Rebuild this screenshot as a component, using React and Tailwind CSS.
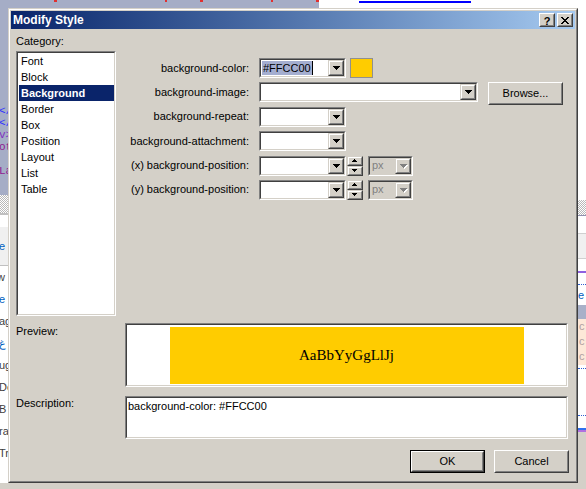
import React from "react";

const Tri = ({ dir = "down", disabled = false, size = "lg" }) => {
  const big = size === "lg";
  const d = big
    ? "M0 0h7v1H0zM1 1h5v1H1zM2 2h3v1H2zM3 3h1v1H3z"
    : "M0 0h5v1H0zM1 1h3v1H1zM2 2h1v1H2z";
  const w = big ? 8 : 6;
  const h = big ? 5 : 4;
  const t = dir === "up" ? `scale(1,-1) translate(0,${big ? -4 : -3})` : undefined;
  return (
    <svg width={w} height={h} viewBox={`0 0 ${w} ${h}`} shapeRendering="crispEdges">
      {disabled && (
        <g transform="translate(1,1)">
          <path d={d} fill="#ffffff" transform={t} />
        </g>
      )}
      <path d={d} fill={disabled ? "#808080" : "#000000"} transform={t} />
    </svg>
  );
};

const DropBtn = ({ disabled }) => (
  <div className="w-[16px] h-full shrink-0 bg-[#d4d0c8] border border-t-[#d4d0c8] border-l-[#d4d0c8] border-r-[#404040] border-b-[#404040]">
    <div className="w-full h-full border border-t-white border-l-white border-r-[#808080] border-b-[#808080] flex items-center justify-center pl-[1px] pt-[1px]">
      <Tri disabled={disabled} />
    </div>
  </div>
);

const SpinBtn = ({ dir }) => (
  <div className="w-full h-[10px] bg-[#d4d0c8] border border-t-[#d4d0c8] border-l-[#d4d0c8] border-r-[#404040] border-b-[#404040]">
    <div className="w-full h-full border border-t-white border-l-white border-r-[#808080] border-b-[#808080] flex items-center justify-center">
      <Tri dir={dir} size="sm" />
    </div>
  </div>
);

const Sunken = ({ className = "", inner = "", children }) => (
  <div className={`border border-t-[#808080] border-l-[#808080] border-r-white border-b-white ${className}`}>
    <div className={`w-full h-full border border-t-[#404040] border-l-[#404040] border-r-[#d4d0c8] border-b-[#d4d0c8] ${inner}`}>
      {children}
    </div>
  </div>
);

const Combo = ({ w, disabled = false, children }) => (
  <Sunken className={`h-[20px] shrink-0 ${w}`} inner={`flex ${disabled ? "bg-[#d4d0c8]" : "bg-white"}`}>
    <div className="flex-1 min-w-0 flex items-center pl-[1px] overflow-hidden">{children}</div>
    <DropBtn disabled={disabled} />
  </Sunken>
);

const PushBtn = ({ w, h, isDefault = false, children }) => {
  const body = (
    <div className="w-full h-full bg-[#d4d0c8] border border-t-white border-l-white border-r-[#404040] border-b-[#404040]">
      <div className="w-full h-full border border-t-[#d4d0c8] border-l-[#d4d0c8] border-r-[#808080] border-b-[#808080] flex items-center justify-center">
        {children}
      </div>
    </div>
  );
  return isDefault ? (
    <div className={`border border-black ${w} ${h}`}>{body}</div>
  ) : (
    <div className={`${w} ${h}`}>{body}</div>
  );
};

const Spinner = () => (
  <div className="ml-[1px] w-[16px] h-[20px] flex flex-col shrink-0">
    <SpinBtn dir="up" />
    <SpinBtn dir="down" />
  </div>
);

const Row = ({ label, children }) => (
  <div className="flex items-start h-[20px]">
    <div className="w-[124px] h-[20px] flex items-center justify-end whitespace-nowrap">{label}</div>
    <div className="ml-[10px] flex items-start">{children}</div>
  </div>
);

const categories = ["Font", "Block", "Background", "Border", "Box", "Position", "Layout", "List", "Table"];

const Checker = ({ h }) => (
  <div
    className={`${h} w-full bg-[repeating-conic-gradient(#b8b8b8_0_25%,#ffffff_0_50%)] bg-[length:2px_2px]`}
  />
);

export default function App() {
  return (
    <div className="relative w-[586px] h-[489px] overflow-hidden bg-white font-['Liberation_Sans',Arial,sans-serif] text-[11px] leading-[13px] text-black">
      {/* background editor */}
      <div className="flex flex-col w-full h-full">
        <div className="h-[8px] flex shrink-0">
          <div className="w-[319px] h-full bg-[#a5adc6] relative overflow-hidden">
            <div className="flex items-start h-full">
              <div className="ml-[54px] mt-[0px] w-[3px] h-[2px] bg-[#e03030]" />
              <div className="ml-[108px] w-[2px] h-[2px] bg-[#e03030]" />
              <div className="ml-[33px] w-[3px] h-[2px] bg-[#e03030]" />
              <div className="ml-[68px] w-[2px] h-[2px] bg-[#e03030]" />
              <div className="ml-[43px] w-[3px] h-[2px] bg-[#e03030]" />
            </div>
          </div>
          <div className="flex-1 h-full bg-white">
            <div className="ml-[40px] mt-[1px] w-[112px] h-[2px] bg-[#0000ff]" />
          </div>
        </div>
        <div className="flex-1 flex">
          <div className="w-[8px] h-full flex flex-col overflow-hidden font-['Liberation_Mono',monospace] text-[11px] leading-[11px]">
            <div className="h-[187px] bg-[#a5adc6] flex flex-col pt-[98px] gap-[1px]">
              <div className="whitespace-nowrap -ml-[1px] text-[#3030ff]">&lt;/</div>
              <div className="whitespace-nowrap -ml-[1px] text-[#3030ff]">&lt;/</div>
              <div className="whitespace-nowrap -ml-[1px] text-[#8030c0]">v&gt;</div>
              <div className="whitespace-nowrap -ml-[1px] text-[#902090]">ot</div>
              <div className="whitespace-nowrap -ml-[1px] mt-[12px] text-[#902090]">La</div>
            </div>
            <Checker h="h-[18px]" />
            <div className="flex-1 bg-white flex flex-col font-['Liberation_Sans',sans-serif] text-[11px] leading-[22px]">
              <div className="h-[2px] bg-[#c0c0c0]" />
              <div className="h-[12px]" />
              <div className="h-[38px] bg-[#f0f0f0] flex items-center text-[#0060c0] -ml-[1px]">e</div>
              <div className="h-[1px] bg-[#c0c0c0]" />
              <div className="whitespace-nowrap -ml-[3px] text-[#404040]">w</div>
              <div className="whitespace-nowrap -ml-[1px] text-[#0060c0]">e</div>
              <div className="whitespace-nowrap -ml-[1px] text-[#404040]">ag</div>
              <div className="whitespace-nowrap -ml-[1px] text-[#0060c0] underline">غ</div>
              <div className="whitespace-nowrap -ml-[1px] text-[#404040]">ug</div>
              <div className="whitespace-nowrap -ml-[1px] text-[#404040]">Do</div>
              <div className="whitespace-nowrap -ml-[1px] text-[#404040]">B</div>
              <div className="whitespace-nowrap -ml-[1px] text-[#404040]">ra</div>
              <div className="whitespace-nowrap -ml-[1px] text-[#404040]">Tr</div>
            </div>
          </div>
          <div className="flex-1 h-full bg-[#d4d0c8]" />
          <div className="w-[8px] h-full flex flex-col overflow-hidden text-[11px] leading-[13px]">
            <div className="h-[192px] bg-white shrink-0" />
            <Checker h="h-[15px]" />
            <div className="h-[1px] bg-[#9090b0]" />
            <div className="h-[17px] bg-white" />
            <div className="h-[26px] bg-[#f0f0f0] border-t border-b border-[#d0d0d0]" />
            <div className="h-[12px] bg-white" />
            <div className="h-[2px] bg-[#9060e0]" />
            <div className="h-[12px] bg-white border-b border-dotted border-[#3060d0]" />
            <div className="h-[20px] bg-white text-[#0060c0] pt-[4px]">e</div>
            <div className="h-[14px] bg-[#a8b0c8]" />
            <div className="h-[46px] bg-[#fde8d8] text-[#b0a0a0] leading-[15px] pl-[1px]">c<br />c<br />c</div>
            <div className="h-[4px] bg-white border-b border-dotted border-[#3060d0]" />
            <div className="h-[47px] bg-white border-b border-dotted border-[#3060d0]" />
            <div className="h-[12px] bg-white" />
            <div className="h-[2px] bg-[#3070f0]" />
            <div className="h-[2px] bg-[#b070e0]" />
            <div className="flex-1 bg-[#d4d0c8]" />
          </div>
        </div>
        <div className="h-[6px] shrink-0 bg-[#d4d0c8]" />
      </div>

      {/* dialog window */}
      <div className="absolute left-[8px] top-[8px] w-[570px] h-[475px] bg-[#d4d0c8] border border-t-[#d4d0c8] border-l-[#d4d0c8] border-r-[#404040] border-b-[#404040]">
        <div className="w-full h-full border border-t-white border-l-white border-r-[#808080] border-b-[#808080] p-[1px] flex flex-col">
          {/* title bar */}
          <div className="h-[18px] shrink-0 bg-linear-to-r from-[#0a246a] to-[#a6caf0] flex items-center pl-[2px] pr-[2px]">
            <div className="flex-1 text-white font-bold text-[12px] leading-[14px]">Modify Style</div>
            <div className="flex gap-[2px]">
              <PushBtn w="w-[16px]" h="h-[14px]">
                <span className="font-bold text-[11px] leading-[10px] mt-[1px]">?</span>
              </PushBtn>
              <PushBtn w="w-[16px]" h="h-[14px]">
                <svg width="8" height="7" viewBox="0 0 8 7" shapeRendering="crispEdges">
                  <path d="M0 0h2v1H0zM6 0h2v1H6zM1 1h2v1H1zM5 1h2v1H5zM2 2h4v1H2zM3 3h2v1H3zM2 4h4v1H2zM1 5h2v1H1zM5 5h2v1H5zM0 6h2v1H0zM6 6h2v1H6z" fill="#000" />
                </svg>
              </PushBtn>
            </div>
          </div>

          {/* body */}
          <div className="flex flex-col pl-[5px] pt-[6px]">
            <div className="flex">
              <div className="w-[100px] flex flex-col">
                <div className="h-[13px]">Category:</div>
                <Sunken className="mt-[3px] w-[100px] h-[265px]" inner="bg-white pt-[0px]">
                  {categories.map((c) => (
                    <div
                      key={c}
                      className={
                        c === "Background"
                          ? "h-[16px] ml-[1px] pl-[2px] flex items-center bg-[#0a246a] text-white font-bold"
                          : "h-[16px] ml-[1px] pl-[2px] flex items-center"
                      }
                    >
                      {c}
                    </div>
                  ))}
                </Sunken>
              </div>
              <div className="ml-[9px] mt-[23px] flex flex-col gap-[4.4px]">
                <Row label="background-color:">
                  <Combo w="w-[87px]">
                    <span className="bg-[#a4aed0] px-[1px] leading-[14px]">#FFCC00</span>
                    <span className="w-[1px] h-[14px] bg-black" />
                  </Combo>
                  <div className="ml-[4px] w-[23px] h-[20px] border border-[#909090] bg-[#ffcc00]" />
                </Row>
                <Row label="background-image:">
                  <Combo w="w-[219px]" />
                  <div className="ml-[10px]">
                    <PushBtn w="w-[75px]" h="h-[23px]">Browse...</PushBtn>
                  </div>
                </Row>
                <Row label="background-repeat:">
                  <Combo w="w-[87px]" />
                </Row>
                <Row label="background-attachment:">
                  <Combo w="w-[87px]" />
                </Row>
                <Row label="(x) background-position:">
                  <Combo w="w-[87px]" />
                  <Spinner />
                  <div className="ml-[5px]">
                    <Combo w="w-[45px]" disabled>
                      <span className="text-[#808080] pl-[1px]">px</span>
                    </Combo>
                  </div>
                </Row>
                <Row label="(y) background-position:">
                  <Combo w="w-[87px]" />
                  <Spinner />
                  <div className="ml-[5px]">
                    <Combo w="w-[45px]" disabled>
                      <span className="text-[#808080] pl-[1px]">px</span>
                    </Combo>
                  </div>
                </Row>
              </div>
            </div>

            {/* preview */}
            <div className="flex mt-[7px]">
              <div className="w-[109px] pt-[2px]">Preview:</div>
              <Sunken className="w-[443px] h-[64px]" inner="bg-white flex items-center justify-center">
                <div className="w-[354px] h-[57px] bg-[#ffcc00] flex items-center justify-center font-['Liberation_Serif','Times_New_Roman',serif] text-[15px] leading-[17px] text-black">
                  AaBbYyGgLlJj
                </div>
              </Sunken>
            </div>

            {/* description */}
            <div className="flex mt-[9px]">
              <div className="w-[109px] pt-[1px]">Description:</div>
              <Sunken className="w-[443px] h-[43px]" inner="bg-white pl-[1px] pt-[2px]">
                background-color: #FFCC00
              </Sunken>
            </div>

            {/* buttons */}
            <div className="flex mt-[11px] pl-[394px] gap-[9px]">
              <PushBtn w="w-[75px]" h="h-[23px]" isDefault>OK</PushBtn>
              <PushBtn w="w-[75px]" h="h-[23px]">Cancel</PushBtn>
            </div>
          </div>
        </div>
      </div>
    </div>
  );
}
